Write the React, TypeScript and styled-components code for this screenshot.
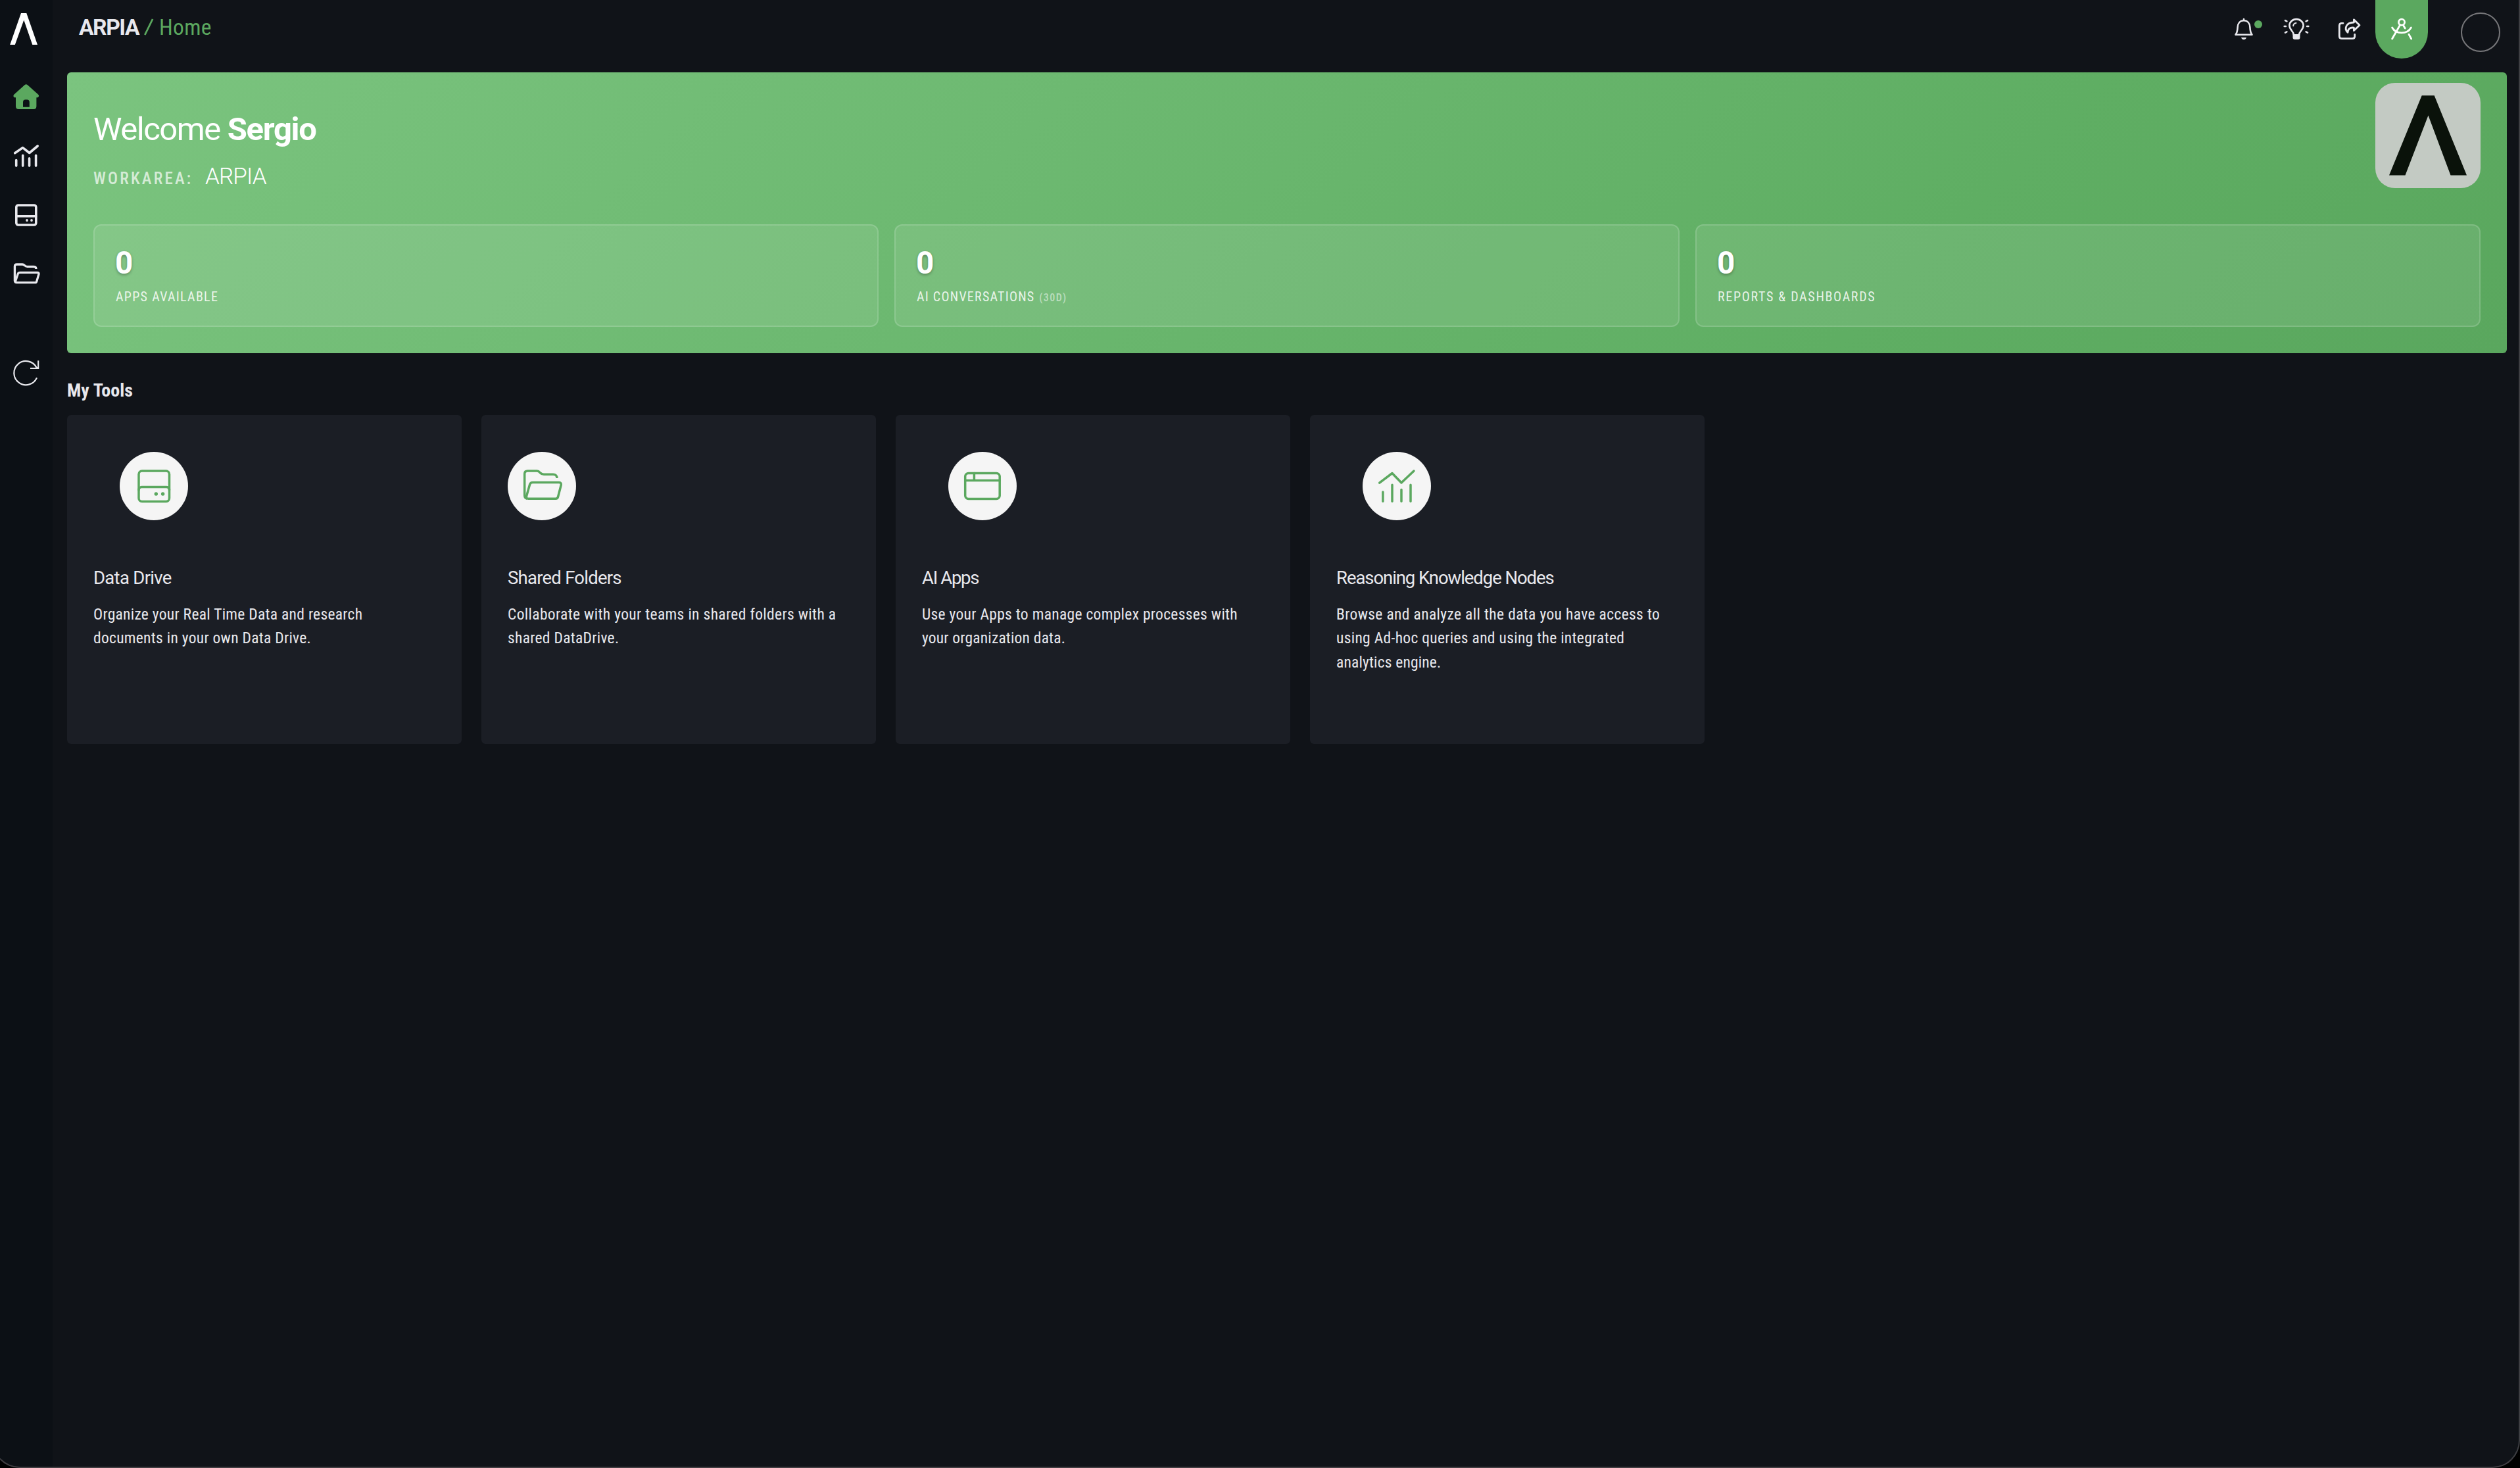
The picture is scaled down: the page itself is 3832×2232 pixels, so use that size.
import React from 'react';
import styled, { createGlobalStyle } from 'styled-components';

const green = '#5ba85f';
const ink = '#e8e8ed';

const GlobalStyle = createGlobalStyle`
  *, *::before, *::after { box-sizing: border-box; }
  body { margin: 0; background: #000; }
  h1, h2, h3, p { margin: 0; font-weight: 400; }
`;

const Shell = styled.div`
  position: relative;
  display: grid;
  grid-template-columns: 80px 1fr;
  width: 3832px;
  height: 2232px;
  overflow: hidden;
  background: #101318;
  color: ${ink};
  font-family: 'Roboto Condensed', Roboto, sans-serif;
  white-space: nowrap;
`;

const WindowEdge = styled.div`
  position: absolute;
  top: -60px;
  left: -12px;
  right: 0;
  bottom: 0;
  border: 2px solid #3d3e42;
  border-bottom-color: #413e42;
  border-radius: 0 0 42px 42px;
  box-shadow: 0 0 0 60px #000;
  pointer-events: none;
`;

const Sidebar = styled.nav`
  display: flex;
  flex-direction: column;
  align-items: center;
  background: #0c1015;
`;

const Brand = styled.div`
  height: 102px;
  width: 80px;
  svg { display: block; }
`;

const NavItem = styled.a<{ $gap?: number }>`
  display: flex;
  align-items: center;
  justify-content: center;
  width: 80px;
  height: 90px;
  margin-top: ${p => p.$gap ?? 0}px;
`;

const Glyph = styled.svg<{ $size: number; $stroke: number; $color?: string }>`
  display: block;
  width: ${p => p.$size}px;
  height: ${p => p.$size}px;
  overflow: visible;
  fill: none;
  stroke: ${p => p.$color ?? ink};
  stroke-width: ${p => p.$stroke};
  stroke-linecap: round;
  stroke-linejoin: round;
  .solid { fill: ${p => p.$color ?? ink}; stroke: none; }
`;

const Main = styled.main`
  display: flex;
  flex-direction: column;
  padding: 0 20px 0 22px;
`;

const TopBar = styled.header`
  display: flex;
  justify-content: space-between;
  height: 110px;
  padding: 0 10px 0 18px;
`;

const Crumbs = styled.div`
  display: flex;
  height: 84px;
  font-size: 33.5px;
  line-height: 84px;
  color: ${green};
`;

const CrumbRoot = styled.strong`
  width: 97px;
  font-family: Roboto, sans-serif;
  font-weight: 700;
  letter-spacing: -1.4px;
  color: ${ink};
`;

const CrumbSlash = styled.svg`
  width: 25px;
  height: 82px;
  fill: none;
  stroke: ${green};
  stroke-width: 2.8;
`;

const CrumbPage = styled.span`
  letter-spacing: 0.3px;
`;

const Actions = styled.div`
  display: flex;
  align-items: flex-start;
`;

const Action = styled.button<{ $active?: boolean }>`
  position: relative;
  display: flex;
  justify-content: center;
  width: 80px;
  height: 89px;
  padding: 24px 0 0;
  border: 0;
  border-radius: 0 0 40px 40px;
  background: ${p => (p.$active ? green : 'transparent')};
`;

const UnreadDot = styled.span`
  position: absolute;
  left: 56px;
  top: 31px;
  width: 12px;
  height: 12px;
  border-radius: 50%;
  background: ${green};
`;

const Avatar = styled.div`
  width: 60px;
  height: 60px;
  margin: 19px 0 0 50px;
  border: 2px solid #77777a;
  border-radius: 50%;
`;

const Banner = styled.section`
  position: relative;
  display: flex;
  flex-direction: column;
  height: 427px;
  padding: 40px;
  border-radius: 6px;
  background: linear-gradient(135deg, #7bc47f 0%, #5fae63 75%, #5aa75e 100%);
  color: #fff;
`;

const Greeting = styled.h1`
  display: flex;
  height: 91px;
  font-family: Roboto, sans-serif;
  font-size: 49px;
  line-height: 93px;
  letter-spacing: -1.5px;
`;

const UserName = styled.b`
  margin-left: 11px;
  font-weight: 700;
  letter-spacing: -1.3px;
`;

const WorkArea = styled.div`
  display: flex;
  height: 60px;
  line-height: 60px;
`;

const WorkAreaLabel = styled.span`
  width: 170px;
  padding-top: 1px;
  font-size: 25px;
  font-weight: 500;
  letter-spacing: 3.15px;
  color: rgba(255, 255, 255, 0.7);
`;

const WorkAreaName = styled.span`
  font-family: Roboto, sans-serif;
  font-size: 35px;
  line-height: 56px;
  letter-spacing: -0.9px;
  font-weight: 300;
`;

const OrgBadge = styled.div`
  position: absolute;
  top: 16px;
  right: 40px;
  width: 160px;
  height: 160px;
  border-radius: 30px;
  background: #c3cac3;
  svg { display: block; }
`;

const Stats = styled.div`
  display: grid;
  grid-template-columns: repeat(3, 1fr);
  gap: 24px;
  margin-top: 40px;
`;

const Stat = styled.div`
  height: 156px;
  padding: 25px 32px;
  border: 2px solid rgba(255, 255, 255, 0.15);
  border-radius: 12px;
  background: rgba(255, 255, 255, 0.09);
`;

const StatValue = styled.div`
  height: 64px;
  margin-left: -1px;
  font-family: Roboto, sans-serif;
  font-size: 47.5px;
  font-weight: 700;
  line-height: 64px;
  text-shadow: 0 2px 4px rgba(0, 0, 0, 0.3);
`;

const StatLabel = styled.div<{ $tracking: number }>`
  height: 30px;
  margin-top: 4px;
  font-size: 20px;
  line-height: 30px;
  letter-spacing: ${p => p.$tracking}px;
  color: rgba(255, 255, 255, 0.85);
`;

const StatNote = styled.small`
  margin-left: 1px;
  font-size: 16px;
  font-weight: 500;
  letter-spacing: 1.4px;
  color: rgba(255, 255, 255, 0.5);
`;

const SectionTitle = styled.h2`
  height: 94px;
  padding-top: 34px;
  font-size: 28px;
  font-weight: 700;
  line-height: 46px;
  letter-spacing: 0.1px;
`;

const Cards = styled.div`
  display: flex;
  gap: 30px;
`;

const Card = styled.article`
  width: 600px;
  height: 500px;
  padding: 56px 40px;
  border-radius: 6px;
  background: #1b1e25;
`;

const IconDisc = styled.div<{ $indent: boolean }>`
  display: flex;
  align-items: center;
  justify-content: center;
  width: 104px;
  height: 104px;
  margin-left: ${p => (p.$indent ? 40 : 0)}px;
  border-radius: 50%;
  background: #f5f5f5;
`;

const CardTitle = styled.h3<{ $tracking: number }>`
  height: 40px;
  margin-top: 67px;
  font-family: Roboto, sans-serif;
  font-size: 27.5px;
  line-height: 41px;
  letter-spacing: ${p => p.$tracking}px;
`;

const CardText = styled.p`
  margin-top: 17.6px;
  font-size: 23.5px;
  line-height: 36.5px;
`;

const Line = styled.span<{ $tracking: number }>`
  display: block;
  letter-spacing: ${p => p.$tracking}px;
`;

type GlyphProps = { large?: boolean };
const small = { $size: 40, $stroke: 3.6, viewBox: '0 0 40 40' };
const large = { $size: 60, $stroke: 3.5, viewBox: '0 0 60 60', $color: green };

const ChartGlyph = ({ large: lg }: GlyphProps) =>
  lg ? (
    <Glyph {...large}>
      <path d="M3.7 25.2 23 10.5 37 25 56 7M8.9 39v14.2M23 28.3v24.9M37 35.6v17.6M51 28.3v24.9" />
    </Glyph>
  ) : (
    <Glyph {...small}>
      <path d="M2.6 15.7 14.7 7.6 24.7 15.5 37.2 5M4.7 26.5v8.6M14.7 19.3v15.8M24.6 23.8v11.3M34.6 19.3v15.8" />
    </Glyph>
  );

const DriveGlyph = ({ large: lg }: GlyphProps) =>
  lg ? (
    <Glyph {...large}>
      <rect x="7" y="7" width="46.5" height="46.5" rx="5" />
      <path d="M7 36a4.5 4.5 0 0 1 4.500-4.500h37.500a4.500 4.500 0 0 1 4.500 4.500" />
      <circle className="solid" cx="33.3" cy="42" r="2.7" />
      <circle className="solid" cx="43.6" cy="42" r="2.7" />
    </Glyph>
  ) : (
    <Glyph {...small}>
      <rect x="4.8" y="5" width="30" height="30" rx="3" />
      <path d="M5 21.800h29.600" />
      <circle className="solid" cx="21" cy="28" r="1.9" />
      <circle className="solid" cx="28" cy="28" r="1.9" />
    </Glyph>
  );

const FolderGlyph = ({ large: lg }: GlyphProps) =>
  lg ? (
    <Glyph {...large}>
      <path strokeLinecap="butt" d="M7.500 49.300C4.500 48.500 3.700 46.500 3.700 44V11.500C3.700 8.700 5.500 7 8.300 7H22.500C25 7 26 8.200 27.600 10C29.200 11.700 30.500 12.300 33 12.300H47C50.700 12.300 53 14.500 53 18" />
      <path d="M16 24.600H56.300C58.700 24.600 59.800 26.300 59.200 28.500L54.500 46.500C54 48.500 53 49.300 51 49.300H9.500C6.800 49.300 6 47.500 6.700 45L11.500 28C12.200 25.500 13.500 24.600 16 24.600Z" />
    </Glyph>
  ) : (
    <Glyph {...small} $stroke={3.3}>
      <path strokeLinecap="butt" d="M4 32.500C2.800 32 2.400 31 2.400 29.500V8C2.400 6 3.500 5 5.500 5H14C15.500 5 16.300 5.500 17.300 6.500C18.500 7.800 19.500 8.400 21.500 8.400H31C33.500 8.400 35 9.500 35 12" />
      <path d="M10.500 17.300H37C38.600 17.300 39.300 18.400 39 19.800L35.700 31C35.300 32.300 34.600 32.700 33.300 32.700H5.500C3.800 32.700 3.300 31.500 3.700 30L7.200 19.500C7.700 18 8.700 17.300 10.500 17.300Z" />
    </Glyph>
  );

const WindowGlyph = () => (
  <Glyph {...large}>
    <rect x="3.7" y="10.500" width="52.500" height="39" rx="5" />
    <path d="M3.700 21.500h52.500M17.400 10.500v11" />
  </Glyph>
);

const HomeGlyph = () => (
  <Glyph $size={40} $stroke={0} $color={green} viewBox="0 0 40 40">
    <path
      className="solid"
      fillRule="evenodd"
      d="M17.700 2Q19.700 .3 21.700 2L38.200 16.700C40 18.500 38.800 21.200 36.500 21.200H35.400V34.500Q35.400 39 31 39H8.500Q4 39 4 34.500V21.200H3C.6 21.200-.4 18.500 1.300 16.700ZM15 35.700H24.800V28.500Q24.800 24.500 21.300 24.500H18.500Q15 24.500 15 28.500Z"
    />
  </Glyph>
);

const RefreshGlyph = () => (
  <Glyph $size={40} $stroke={2.2} viewBox="0 0 40 40">
    <path strokeLinecap="butt" d="M36 27.400A18.100 18.100 0 1 1 35.500 11.800L38.200 13M38.200 1.200V13H26" strokeLinejoin="miter" />
  </Glyph>
);

const BellGlyph = () => (
  <Glyph $size={40} $stroke={2.6} viewBox="0 0 40 40">
    <path d="M20 7.300C14 7.300 10.800 11.800 10.600 17.500C10.400 22.500 10 25.500 7.500 28.700H32.500C30 25.500 29.600 22.500 29.400 17.500C29.200 11.800 26 7.300 20 7.300ZM20 5v2" />
    <path className="solid" d="M16 33h8q-1.200 3.200-4 3.200T16 33Z" />
  </Glyph>
);

const BulbGlyph = () => (
  <Glyph $size={40} $stroke={2.6} viewBox="0 0 40 40">
    <path d="M15.800 28.500C15.800 23.500 9.400 21.500 9.400 14.800A10.600 9.700 0 0 1 30.600 14.800C30.600 21.500 24.200 23.500 24.200 28.500" />
    <path d="M15.200 15.300Q15.500 11.600 19.500 11" strokeWidth="2" />
    <path className="solid" d="M14.500 28h11v5q0 3-3 3h-5q-3 0-3-3Z" />
    <path d="M1.700 16h2.200M36.100 16h2.200M3 7.200l2.400 1.200M37 7.200l-2.400 1.200M3 25.600l2.400-1.200M37 25.600l-2.400-1.200" />
  </Glyph>
);

const ShareGlyph = () => (
  <Glyph $size={40} $stroke={2.8} viewBox="0 0 40 40">
    <path d="M11 11.300H8.800Q5.300 11.300 5.300 15V31Q5.300 34.700 9 34.700H25Q28.700 34.700 28.700 31.200V28.500" />
    <path d="M27.400 5.800 36 14.200 27.400 22.600V18.200C21.500 17.200 18.500 19.800 18 25.300C12.500 20 14.800 10.300 27.400 10Z" />
  </Glyph>
);

const CompassGlyph = () => (
  <Glyph $size={40} $stroke={2.8} $color="#fff" viewBox="0 0 40 40">
    <circle cx="20" cy="9.800" r="4.600" />
    <path d="M17.600 14 5.600 35M22.300 14 25.200 19M31 28.300 34.700 35M5.600 18C11.500 28.500 28.500 28.500 34.400 18" />
  </Glyph>
);

const stats = [
  { label: 'APPS AVAILABLE', tracking: 1.3 },
  { label: 'AI CONVERSATIONS', note: '(30D)', tracking: 1.25 },
  { label: 'REPORTS & DASHBOARDS', tracking: 1.7 },
];

const tools: { title: string; tracking: number; indent: boolean; icon: React.ReactNode; lines: [string, number][] }[] = [
  {
    title: 'Data Drive', tracking: -0.7, indent: true, icon: <DriveGlyph large />,
    lines: [['Organize your Real Time Data and research', 0.29], ['documents in your own Data Drive.', 0.29]],
  },
  {
    title: 'Shared Folders', tracking: -0.75, indent: false, icon: <FolderGlyph large />,
    lines: [['Collaborate with your teams in shared folders with a', 0.35], ['shared DataDrive.', 0.3]],
  },
  {
    title: 'AI Apps', tracking: -1.3, indent: true, icon: <WindowGlyph />,
    lines: [['Use your Apps to manage complex processes with', 0.31], ['your organization data.', 0.2]],
  },
  {
    title: 'Reasoning Knowledge Nodes', tracking: -1.07, indent: true, icon: <ChartGlyph large />,
    lines: [['Browse and analyze all the data you have access to', 0.36], ['using Ad-hoc queries and using the integrated', 0.31], ['analytics engine.', 0.18]],
  },
];

export default function App() {
  return (
    <Shell>
      <GlobalStyle />
      <Sidebar>
        <Brand>
          <svg width="80" height="102" fill="#fff">
            <path d="M32 20H40.300L57 68H49.300L36.300 30.500 22.800 68H15.200Z" />
          </svg>
        </Brand>
        <NavItem><HomeGlyph /></NavItem>
        <NavItem><ChartGlyph /></NavItem>
        <NavItem><DriveGlyph /></NavItem>
        <NavItem><FolderGlyph /></NavItem>
        <NavItem $gap={60}><RefreshGlyph /></NavItem>
      </Sidebar>
      <Main>
        <TopBar>
          <Crumbs>
            <CrumbRoot>ARPIA</CrumbRoot>
            <CrumbSlash viewBox="0 0 25 82"><path d="M3.300 53 15.100 29" /></CrumbSlash>
            <CrumbPage>Home</CrumbPage>
          </Crumbs>
          <Actions>
            <Action><BellGlyph /><UnreadDot /></Action>
            <Action><BulbGlyph /></Action>
            <Action><ShareGlyph /></Action>
            <Action $active><CompassGlyph /></Action>
            <Avatar />
          </Actions>
        </TopBar>
        <Banner>
          <Greeting>Welcome<UserName>Sergio</UserName></Greeting>
          <WorkArea>
            <WorkAreaLabel>WORKAREA:</WorkAreaLabel>
            <WorkAreaName>ARPIA</WorkAreaName>
          </WorkArea>
          <OrgBadge>
            <svg width="160" height="160" fill="#0a120a">
              <path d="M70.700 19.200H89.700L139 140.500H114.500L80.500 49.500 45.500 140.500H21Z" />
            </svg>
          </OrgBadge>
          <Stats>
            {stats.map(s => (
              <Stat key={s.label}>
                <StatValue>0</StatValue>
                <StatLabel $tracking={s.tracking}>
                  {s.label}{s.note && <> <StatNote>{s.note}</StatNote></>}
                </StatLabel>
              </Stat>
            ))}
          </Stats>
        </Banner>
        <SectionTitle>My Tools</SectionTitle>
        <Cards>
          {tools.map(t => (
            <Card key={t.title}>
              <IconDisc $indent={t.indent}>{t.icon}</IconDisc>
              <CardTitle $tracking={t.tracking}>{t.title}</CardTitle>
              <CardText>
                {t.lines.map(([text, tracking]) => (
                  <Line key={text} $tracking={tracking}>{text}</Line>
                ))}
              </CardText>
            </Card>
          ))}
        </Cards>
      </Main>
      <WindowEdge />
    </Shell>
  );
}
